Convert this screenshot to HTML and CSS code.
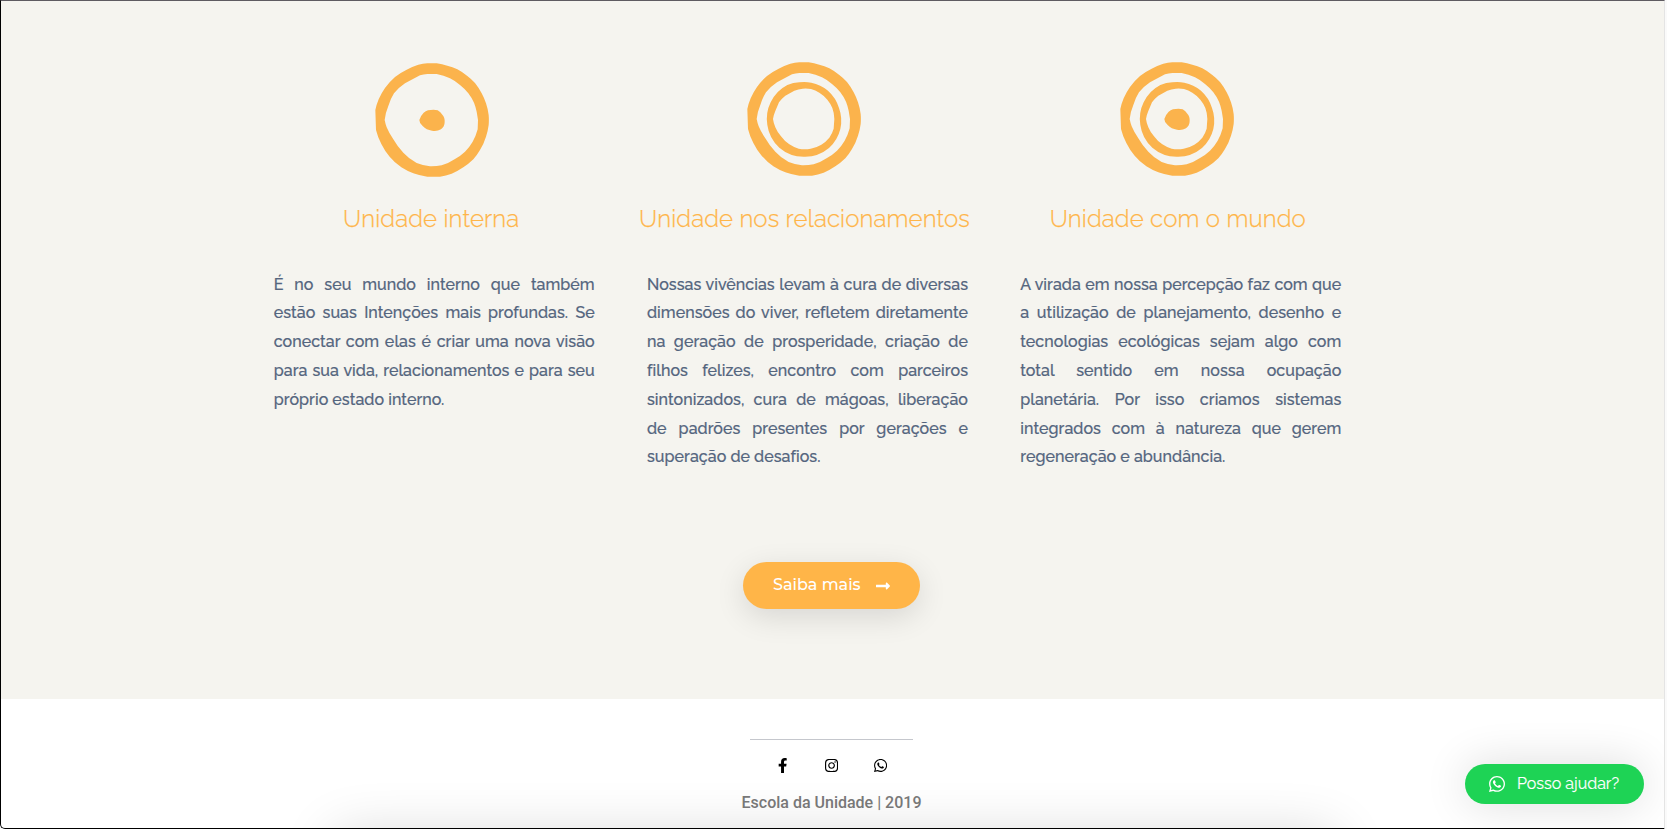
FILE: index.html
```html
<!DOCTYPE html>
<html lang="pt-BR">
<head>
    <meta charset="UTF-8">
    <meta name="viewport" content="width=device-width, initial-scale=1.0">
    <title>Escola da Unidade</title>
    <link rel="stylesheet" href="styles.css">
</head>
<body>
    <!-- Formas reutilizadas nos três símbolos -->
    <svg class="defs" aria-hidden="true">
        <defs>
            <path id="anel" fill-rule="evenodd" d="M262 70L290 70A180 180 0 0 1 322 77A180 180 0 0 1 352 88A180 180 0 0 1 382 108A180 180 0 0 1 405 129A180 180 0 0 1 425 160A180 180 0 0 1 438 190A180 180 0 0 1 446 225A180 180 0 0 1 446 255A180 180 0 0 1 438 290A180 180 0 0 1 420 330A180 180 0 0 1 400 358A180 180 0 0 1 370 382A180 180 0 0 1 335 401A180 180 0 0 1 300 410L262 410A180 180 0 0 1 220 400A180 180 0 0 1 184 382A180 180 0 0 1 149 350A180 180 0 0 1 124 312A180 180 0 0 1 108 270L106 210A180 180 0 0 1 116 178A180 180 0 0 1 135 144A180 180 0 0 1 165 111A180 180 0 0 1 200 89A180 180 0 0 1 235 74A180 180 0 0 1 262 70ZM262 102L290 102A150 150 0 0 1 330 115A150 150 0 0 1 360 135A150 150 0 0 1 385 160A150 150 0 0 1 402 188A150 150 0 0 1 410 215L414 240L413 268A150 150 0 0 1 398 305A150 150 0 0 1 375 335A150 150 0 0 1 345 357A150 150 0 0 1 305 376A150 150 0 0 1 270 379A150 150 0 0 1 230 369A150 150 0 0 1 190 338A190 190 0 0 1 160 298A190 190 0 0 1 140 262A150 150 0 0 1 134 240A150 150 0 0 1 145 198A150 150 0 0 1 162 160A150 150 0 0 1 195 130L240 106A150 150 0 0 1 262 102Z"/>
            <path id="anel-interno" fill-rule="evenodd" d="M262 130A112 112 0 0 1 298 131A112 112 0 0 1 348 155A112 112 0 0 1 381 207A112 112 0 0 1 385 270A112 112 0 0 1 351 327A112 112 0 0 1 276 353A112 112 0 0 1 202 326A112 112 0 0 1 166 258A112 112 0 0 1 176 190A112 112 0 0 1 226 138A112 112 0 0 1 262 130ZM272 149A95 95 0 0 0 247 155L220 170A95 95 0 0 0 201 190L190 216A95 95 0 0 0 183 240A95 95 0 0 0 190 265A95 95 0 0 0 207 292A95 95 0 0 0 232 316A95 95 0 0 0 260 329A95 95 0 0 0 296 329A95 95 0 0 0 328 317A95 95 0 0 0 352 296A95 95 0 0 0 365 269L367 240A95 95 0 0 0 361 207A95 95 0 0 0 346 182A95 95 0 0 0 322 161A95 95 0 0 0 297 150A95 95 0 0 0 272 149Z"/>
            <path id="ponto" d="M264 211Q282 208 293 211Q302 216 307 224Q315 232 314 246Q314 260 303 268Q290 275 276 272Q259 270 248 258Q238 250 238 240Q241 228 251 218Q257 214 264 211Z"/>
            <path id="whatsapp" d="M380.9 97.1C339 55.1 283.2 32 223.9 32c-122.4 0-222 99.6-222 222 0 39.1 10.2 77.3 29.6 111L0 480l117.7-30.9c32.4 17.7 68.9 27 106.1 27h.1c122.3 0 224.1-99.6 224.1-222 0-59.3-25.2-115-67.1-157zm-157 341.6c-33.2 0-65.7-8.9-94-25.7l-6.7-4-69.8 18.3L72 359.2l-4.4-7c-18.5-29.4-28.2-63.3-28.2-98.2 0-101.7 82.8-184.5 184.6-184.5 49.3 0 95.6 19.2 130.4 54.1 34.8 34.9 56.2 81.2 56.1 130.5 0 101.8-84.9 184.6-186.6 184.6zm101.2-138.2c-5.5-2.8-32.8-16.2-37.9-18-5.1-1.9-8.8-2.8-12.5 2.8-3.7 5.6-14.3 18-17.6 21.8-3.2 3.7-6.5 4.2-12 1.4-32.6-16.3-54-29.1-75.5-66-5.7-9.8 5.7-9.1 16.3-30.3 1.8-3.7.9-6.9-.5-9.7-1.4-2.8-12.5-30.1-17.1-41.2-4.5-10.8-9.1-9.3-12.5-9.5-3.2-.2-6.9-.2-10.6-.2-3.7 0-9.7 1.4-14.8 6.9-5.1 5.6-19.4 19-19.4 46.3 0 27.3 19.9 53.7 22.6 57.4 2.8 3.7 39.1 59.7 94.8 83.8 35.2 15.2 49 16.5 66.6 13.9 10.7-1.6 32.8-13.4 37.4-26.4 4.6-13 4.6-24.1 3.2-26.4-1.3-2.5-5-3.9-10.5-6.6z"/>
        </defs>
    </svg>

    <div class="page">
        <section class="unidades">
            <div class="colunas">
                <div class="coluna">
                    <svg class="simbolo simbolo-interna" viewBox="105 69 342 342">
                        <use href="#anel"/>
                        <use href="#ponto"/>
                    </svg>
                    <h2 class="titulo">Unidade interna</h2>
                    <p class="texto">É no seu mundo interno que também estão suas Intenções mais profundas. Se conectar com elas é criar uma nova visão para sua vida, relacionamentos e para seu próprio estado interno.</p>
                </div>
                <div class="coluna">
                    <svg class="simbolo" viewBox="105 69 342 342">
                        <use href="#anel"/>
                        <use href="#anel-interno"/>
                    </svg>
                    <h2 class="titulo">Unidade nos relacionamentos</h2>
                    <p class="texto">Nossas vivências levam à cura de diversas dimensões do viver, refletem diretamente na geração de prosperidade, criação de filhos felizes, encontro com parceiros sintonizados, cura de mágoas, liberação de padrões presentes por gerações e superação de desafios.</p>
                </div>
                <div class="coluna">
                    <svg class="simbolo" viewBox="105 69 342 342">
                        <use href="#anel"/>
                        <use href="#anel-interno"/>
                        <use href="#ponto"/>
                    </svg>
                    <h2 class="titulo">Unidade com o mundo</h2>
                    <p class="texto">A virada em nossa percepção faz com que a utilização de planejamento, desenho e tecnologias ecológicas sejam algo com total sentido em nossa ocupação planetária. Por isso criamos sistemas integrados com à natureza que gerem regeneração e abundância.</p>
                </div>
            </div>
            <a class="botao" href="#">
                <span class="botao-texto">Saiba mais</span>
                <svg class="seta" viewBox="0 0 448 512"><path d="M313.941 216H12c-6.627 0-12 5.373-12 12v56c0 6.627 5.373 12 12 12h301.941v46.059c0 21.382 25.851 32.09 40.971 16.971l86.059-86.059c9.373-9.373 9.373-24.569 0-33.941l-86.059-86.059c-15.119-15.119-40.971-4.411-40.971 16.971V216z"/></svg>
            </a>
        </section>

        <footer class="rodape">
            <div class="divisor"></div>
            <div class="redes">
                <a href="#" aria-label="Facebook"><svg viewBox="0 0 320 512"><path d="M279.14 288l14.22-92.66h-88.91v-60.13c0-25.35 12.42-50.06 52.24-50.06h40.42V6.26S260.43 0 225.36 0c-73.22 0-121.08 44.38-121.08 124.72v70.62H22.89V288h81.39v224h100.17V288z"/></svg></a>
                <a href="#" aria-label="Instagram"><svg viewBox="0 0 448 512"><path d="M224.1 141c-63.6 0-114.9 51.3-114.9 114.9s51.3 114.9 114.9 114.9S339 319.5 339 255.9 287.7 141 224.1 141zm0 189.6c-41.1 0-74.7-33.5-74.7-74.7s33.5-74.7 74.7-74.7 74.7 33.5 74.7 74.7-33.6 74.7-74.7 74.7zm146.4-194.3c0 14.9-12 26.8-26.8 26.8-14.9 0-26.8-12-26.8-26.8s12-26.8 26.8-26.8 26.8 12 26.8 26.8zm76.1 27.2c-1.7-35.9-9.9-67.7-36.2-93.9-26.2-26.2-58-34.4-93.9-36.2-37-2.1-147.9-2.1-184.9 0-35.8 1.7-67.6 9.9-93.9 36.1s-34.4 58-36.2 93.9c-2.1 37-2.1 147.9 0 184.9 1.7 35.9 9.9 67.7 36.2 93.9s58 34.4 93.9 36.2c37 2.1 147.9 2.1 184.9 0 35.9-1.7 67.7-9.9 93.9-36.2 26.2-26.2 34.4-58 36.2-93.9 2.1-37 2.1-147.8 0-184.8zM398.8 388c-7.8 19.6-22.9 34.7-42.6 42.6-29.5 11.7-99.5 9-132.1 9s-102.7 2.6-132.1-9c-19.6-7.8-34.7-22.9-42.6-42.6-11.7-29.5-9-99.5-9-132.1s-2.6-102.7 9-132.1c7.8-19.6 22.9-34.7 42.6-42.6 29.5-11.7 99.5-9 132.1-9s102.7-2.6 132.1 9c19.6 7.8 34.7 22.9 42.6 42.6 11.7 29.5 9 99.5 9 132.1s2.7 102.7-9 132.1z"/></svg></a>
                <a href="#" aria-label="WhatsApp"><svg viewBox="0 0 448 512"><use href="#whatsapp"/></svg></a>
            </div>
            <p class="copyright">Escola da Unidade | 2019</p>
        </footer>

        <div class="sombra-inferior"></div>
        <a class="ajuda" href="#">
            <svg class="ajuda-icone" viewBox="0 32 448 448"><use href="#whatsapp"/></svg>
            <span class="ajuda-texto">Posso ajudar?</span>
        </a>
    </div>
</body>
</html>
```
FILE: styles.css
```css
* {
    box-sizing: border-box;
}
body {
    margin: 0;
    background: #fafafa;
    font-family: Raleway, Lato, sans-serif;
}
a {
    color: inherit;
    text-decoration: none;
}
.defs {
    display: none;
}
.page {
    position: relative;
    width: 1665px;
    height: 829px;
    border: 1px solid #000;
    border-top-color: #5e5b61;
    border-right-color: #e4e4e4;
    border-bottom-left-radius: 5px;
    background: #fff;
    overflow: hidden;
}
.unidades {
    display: flex;
    flex-direction: column;
    align-items: center;
    height: 698px;
    padding: 61px 2px 0 0;
    background: #f5f4ef;
}
.colunas {
    display: grid;
    grid-template-columns: repeat(3, 321px);
    column-gap: 52.3px;
    height: 500px;
    margin-right: 48px;
}
.coluna {
    display: flex;
    flex-direction: column;
    align-items: center;
}
.simbolo {
    width: 114px;
    height: 114px;
    margin-right: 7px;
    fill: #fbb34c;
}
.simbolo-interna {
    position: relative;
    top: 1px;
    left: 1px;
}
.titulo {
    margin: 28px 6px 0 0;
    color: #ffb548;
    font-size: 24px;
    font-weight: 300;
    line-height: 30px;
    letter-spacing: 0.12px;
    -webkit-text-stroke: 0.25px #ffb548;
    white-space: nowrap;
}
.texto {
    align-self: stretch;
    margin: 36.7px 0 0;
    color: #54657e;
    font-size: 16px;
    font-weight: 500;
    line-height: 28.8px;
    letter-spacing: 0.05px;
    -webkit-text-stroke: 0.2px #54657e;
    text-align: justify;
}
.botao {
    display: flex;
    align-items: center;
    justify-content: space-between;
    width: 177px;
    height: 47px;
    padding: 0 30px;
    border-radius: 24px;
    background: #ffb548;
    box-shadow: 0 8px 30px rgba(0, 0, 0, 0.12);
    color: #fff;
    font-family: Montserrat, Inter, sans-serif;
    font-size: 16px;
    font-weight: 500;
}
.botao-texto {
    padding-bottom: 2px;
}
.seta {
    width: 14px;
    height: 16px;
    fill: #fff;
}
.rodape {
    display: flex;
    flex-direction: column;
    align-items: center;
    padding: 40px 2px 0 0;
}
.divisor {
    width: 163px;
    height: 1px;
    background: #c5c7cd;
}
.redes {
    display: flex;
    gap: 34px;
    margin-top: 18px;
}
.redes a {
    display: flex;
    justify-content: center;
    width: 15px;
}
.redes svg {
    height: 15px;
    fill: #000;
}
.copyright {
    margin: 18px 0 0;
    color: #7a7a7a;
    font-family: Roboto, sans-serif;
    font-size: 16px;
    font-weight: 500;
    line-height: 24px;
}
.sombra-inferior {
    position: absolute;
    top: 834px;
    left: 334px;
    width: 1000px;
    height: 60px;
    box-shadow: 0 0 55px rgba(0, 0, 0, 0.16);
}
.ajuda {
    position: absolute;
    right: 20px;
    bottom: 24px;
    display: flex;
    align-items: center;
    gap: 12px;
    width: 179px;
    height: 40px;
    padding-left: 24px;
    border-radius: 20px;
    background: #1ed355;
    box-shadow: 0 0 45px rgba(0, 0, 0, 0.14);
    color: #fff;
    font-size: 16px;
    -webkit-text-stroke: 0.15px #fff;
    white-space: nowrap;
}
.ajuda-icone {
    width: 16px;
    height: 16px;
    fill: #fff;
}
.ajuda-texto {
    padding-bottom: 2px;
}
```
